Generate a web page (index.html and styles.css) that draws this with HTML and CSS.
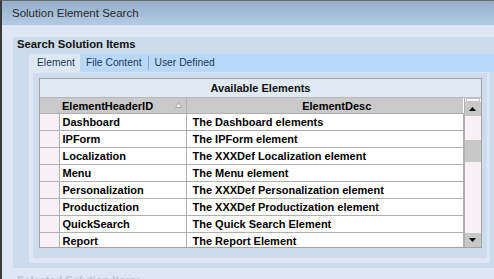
FILE: index.html
```html
<!DOCTYPE html>
<html lang="en">
<head>
  <meta charset="UTF-8">
  <title>Solution Element Search</title>
  <link rel="stylesheet" href="styles.css">
</head>
<body>

  <div class="window">
    <div class="titlebar">Solution Element Search</div>

    <div class="content">
      <div class="group">
        <div class="group-title">Search Solution Items</div>

        <div class="group-body">
          <div class="tabs">
            <span class="tab active">Element</span>
            <span class="tab">File Content</span>
            <span class="tab sep">User Defined</span>
          </div>

          <div class="tab-page">
            <div class="inner">
              <div class="grid">
                <div class="caption">Available Elements</div>
                <div class="grid-main">
                  <table class="rows">
                    <colgroup>
                      <col class="c-sel">
                      <col class="c-id">
                      <col class="c-desc">
                    </colgroup>
                    <thead>
                      <tr>
                        <th class="sel"></th>
                        <th class="id-head">ElementHeaderID
                          <svg class="sort" width="7" height="6" viewBox="0 0 7 6"><path d="M3.5 0.5 L6.5 5.5 L0.5 5.5 Z" fill="#f2f2f2" stroke="#a8a8a8" stroke-width="1"/></svg>
                        </th>
                        <th class="desc-head">ElementDesc</th>
                      </tr>
                    </thead>
                    <tbody>
                      <tr><td class="sel"></td><td>Dashboard</td><td class="desc">The Dashboard elements</td></tr>
                      <tr><td class="sel"></td><td>IPForm</td><td class="desc">The IPForm element</td></tr>
                      <tr><td class="sel"></td><td>Localization</td><td class="desc">The XXXDef Localization element</td></tr>
                      <tr><td class="sel"></td><td>Menu</td><td class="desc">The Menu element</td></tr>
                      <tr><td class="sel"></td><td>Personalization</td><td class="desc">The XXXDef Personalization element</td></tr>
                      <tr><td class="sel"></td><td>Productization</td><td class="desc">The XXXDef Productization element</td></tr>
                      <tr><td class="sel"></td><td>QuickSearch</td><td class="desc">The Quick Search Element</td></tr>
                      <tr><td class="sel"></td><td>Report</td><td class="desc">The Report Element</td></tr>
                    </tbody>
                  </table>

                  <div class="vscroll">
                    <div class="sb-cap"></div>
                    <div class="sb-btn">
                      <svg width="7" height="4" viewBox="0 0 7 4"><path d="M3.5 0 L7 4 L0 4 Z" fill="#000"/></svg>
                    </div>
                    <div class="sb-track">
                      <div class="sb-thumb"></div>
                    </div>
                    <div class="sb-btn">
                      <svg width="7" height="4" viewBox="0 0 7 4"><path d="M0 0 L7 0 L3.5 4 Z" fill="#000"/></svg>
                    </div>
                  </div>
                </div>
              </div>
            </div>
          </div>
        </div>
      </div>

      <div class="next-title">Selected Solution Items</div>
    </div>
  </div>

</body>
</html>
```

FILE: styles.css
```css
body {
  margin: 0;
  background: #dde8f4;
  font-family: "Liberation Sans", Arial, sans-serif;
  overflow: hidden;
}

.window {
  height: 279px;
  border-left: 2px solid #3a3a3a;
  border-top: 1px solid #6b6b6b;
  box-sizing: border-box;
  overflow: hidden;
}

.titlebar {
  height: 24px;
  line-height: 24px;
  padding-left: 10px;
  font-size: 11.5px;
  color: #2a2a2a;
  background: linear-gradient(#93aecd, #b4cbe3);
}

.content {
  padding: 12px 0 0 11px;
}

.group {
  background: #cddbeb;
  padding-bottom: 5px;
}

.group-title {
  height: 16px;
  line-height: 15px;
  padding-left: 4px;
  font-size: 11.3px;
  font-weight: bold;
  color: #111;
}

.group-body {
  padding-left: 16px;
}

.tabs {
  display: flex;
  height: 18px;
  background: #b9d9fb;
  border-top: 1px solid #c9dcf0;
}

.tab {
  font-size: 10.3px;
  line-height: 18px;
  color: #1e3a60;
  padding: 0 6px;
}

.tab.active {
  background: #dde8f4;
  border-radius: 3px 0 0 0;
  padding: 0 8px 0 8px;
  width: 35px;
}

.tab.sep {
  border-left: 1px solid #8fa6c0;
  margin: 2px 0 2px 0;
  line-height: 14px;
}

.tab-page {
  background: #dde8f4;
  margin-right: 4px;
  padding: 1px 3px 5px 4px;
}

.inner {
  background: #cfdcec;
  padding: 5px 5px 10px 6px;
}

.grid {
  border: 1px solid #a3a3a3;
  background: #fff;
}

.caption {
  height: 18px;
  line-height: 18px;
  background: #dfe8f3;
  text-align: center;
  font-size: 11px;
  font-weight: bold;
  color: #111;
  border-bottom: 1px solid #b8b8b8;
}

.grid-main {
  display: flex;
  height: 149px;
  overflow: hidden;
}

.rows {
  border-collapse: collapse;
  table-layout: fixed;
  width: 423px;
  font-size: 11px;
  font-weight: bold;
  color: #000;
}

.c-sel { width: 19px; }
.c-id { width: 127px; }
.c-desc { width: 277px; }

.rows th {
  height: 15px;
  background: #c9c9c9;
  border-right: 1px solid #b0b0b0;
  border-bottom: 1px solid #b0b0b0;
  font-size: 11px;
  text-align: left;
  padding: 0 0 0 3px;
}

.rows th.sel {
  border-right: none;
}

.rows th.desc-head {
  text-align: center;
  padding-left: 24px;
  border-right: none;
}

.id-head {
  position: relative;
}

.sort {
  position: absolute;
  right: 4px;
  top: 4px;
}

.rows td {
  height: 16px;
  padding: 0 0 0 3px;
  border-right: 1px solid #b0b0b0;
  border-bottom: 1px solid #b0b0b0;
  white-space: nowrap;
  overflow: hidden;
}

.rows td.sel {
  background: #f8f0f4;
}

.rows td.desc {
  padding-left: 6px;
}

.vscroll {
  width: 18px;
  display: flex;
  flex-direction: column;
  background: #f7f0f4;
  border-left: 1px solid #b0b0b0;
}

.sb-cap {
  height: 2px;
  margin: 0 1px;
  border: 1px solid #c4c4c4;
  background: #fbfbfb;
}

.sb-btn {
  height: 14px;
  background: #c8c8c8;
  display: flex;
  align-items: center;
  justify-content: center;
}

.sb-track {
  flex: 1;
  padding-top: 24px;
}

.sb-thumb {
  height: 22px;
  background: #c8c8c8;
}

.next-title {
  margin-top: 6px;
  padding-left: 4px;
  font-size: 11px;
  font-weight: bold;
  color: #b9c6d4;
}
```
